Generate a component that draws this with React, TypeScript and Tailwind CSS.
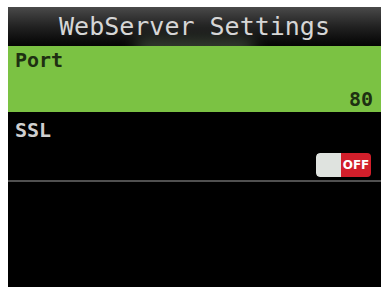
import React from "react";

export default function App() {
  const mono = { fontFamily: '"DejaVu Sans Mono", "Liberation Mono", monospace' };
  return (
    <div className="w-[385px] h-[290px] bg-white pl-[8px] pt-[7px] overflow-hidden">
      <div className="w-[373px] h-[280px] bg-black flex flex-col" style={mono}>
        <div className="relative h-[39px] flex items-center justify-center bg-gradient-to-b from-[#4a4a4a] via-[#222222] to-[#050505] overflow-hidden">
          <div className="absolute bottom-[-10px] left-1/2 -translate-x-1/2 w-[120px] h-[16px] rounded-full bg-[#5a6a55] blur-[8px] opacity-70" />
          <span className="relative text-[25px] leading-none text-[#d6d6d6]">WebServer Settings</span>
        </div>
        <div className="h-[66px] bg-[#7bc243] flex flex-col px-[7px] pt-[3px]">
          <span className="text-[20px] font-bold leading-[22px] text-[#1e3012]">Port</span>
          <span className="self-end mt-[17px] mr-[1px] text-[20px] font-bold leading-[22px] text-[#1e3012]">80</span>
        </div>
        <div className="h-[70px] flex flex-col px-[7px] pt-[7px] border-b-[2px] border-[#505050]">
          <span className="text-[20px] font-bold leading-[22px] text-[#cfcfcf]">SSL</span>
          <div className="self-end mt-[12px] mr-[3px] flex h-[24px] w-[55px] rounded-[4px] overflow-hidden">
            <div className="w-[25px] bg-[#dfe3df] rounded-l-[4px]" />
            <div className="flex-1 bg-[#d21f2b] flex items-center justify-center">
              <span className="text-[12px] font-bold text-white leading-none" style={{ fontFamily: '"DejaVu Sans", sans-serif' }}>OFF</span>
            </div>
          </div>
        </div>
        <div className="flex-1" />
      </div>
    </div>
  );
}
